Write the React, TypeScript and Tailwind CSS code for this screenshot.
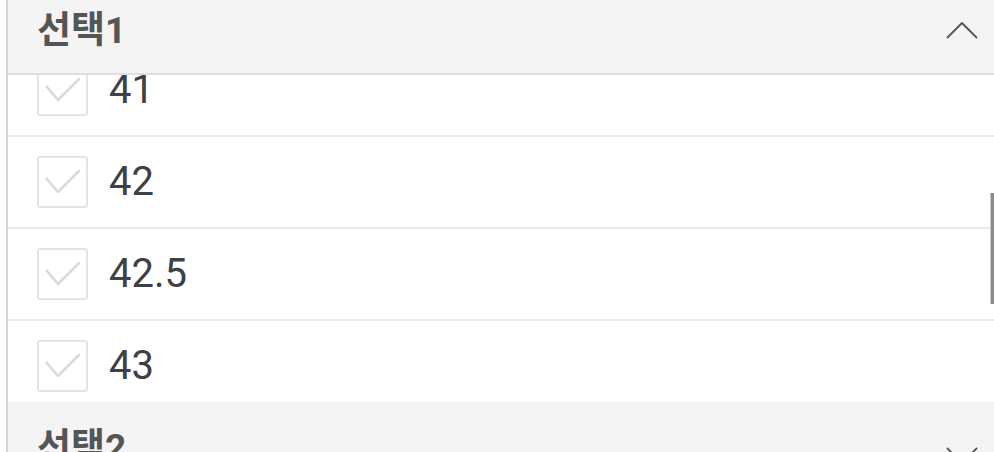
import React from "react";

const font = { fontFamily: "Roboto, 'Noto Sans CJK KR', sans-serif" };

function Check() {
  return (
    <div className="relative w-[51px] h-[52px] shrink-0 rounded-[3px] border-2 border-[#e4e4e4] bg-white">
      <svg width="51" height="52" viewBox="0 0 51 52" className="absolute -left-[2px] -top-[2px]">
        <path d="M9.5 22.5 L21 36 L42 15" fill="none" stroke="#dadada" strokeWidth="2.6" strokeLinecap="round" strokeLinejoin="round" />
      </svg>
    </div>
  );
}

function Row({ label }: { label: string }) {
  return (
    <div className="h-[92px] border-b-2 border-[#ececec] flex items-center pl-[29px] pr-4">
      <Check />
      <span className="ml-[21px] text-[40px] leading-none text-[#3e4045]">{label}</span>
    </div>
  );
}

function Chevron({ up }: { up: boolean }) {
  return (
    <svg width="32" height="18" viewBox="0 0 32 18">
      <path
        d={up ? "M1.5 16.5 L16 2 L30.5 16.5" : "M1.5 1.5 L16 16 L30.5 1.5"}
        fill="none"
        stroke="#555"
        strokeWidth="1.8"
        strokeLinecap="round"
        strokeLinejoin="round"
      />
    </svg>
  );
}

export default function App() {
  return (
    <div className="w-[994px] h-[452px] overflow-hidden bg-white pl-[6px]" style={font}>
      <div className="border-l-2 border-[#d6d6d6] -mt-[12px]">
        <div className="h-[87px] bg-[#f4f4f4] border-b-2 border-[#dedede] flex items-center justify-between pl-[29px] pr-[16px]">
          <span className="text-[37px] font-bold text-[#555] leading-none">선택1</span>
          <div className="-mt-[2px]">
            <Chevron up />
          </div>
        </div>
        <div className="relative h-[327px] overflow-hidden">
          <div className="-mt-[30px]">
            <Row label="41" />
            <Row label="42" />
            <Row label="42.5" />
            <Row label="43" />
          </div>
          <div className="absolute right-0 top-[118px] w-[4px] h-[111px] bg-[#8c8c8c] border-l border-[#c8c8c8]" />
        </div>
        <div className="h-[86px] bg-[#f4f4f4] flex items-start justify-between pl-[29px] pr-[16px] pt-[27px]">
          <span className="text-[37px] font-bold text-[#555] leading-none">선택2</span>
          <div className="mt-[18px]">
            <Chevron up={false} />
          </div>
        </div>
      </div>
    </div>
  );
}
